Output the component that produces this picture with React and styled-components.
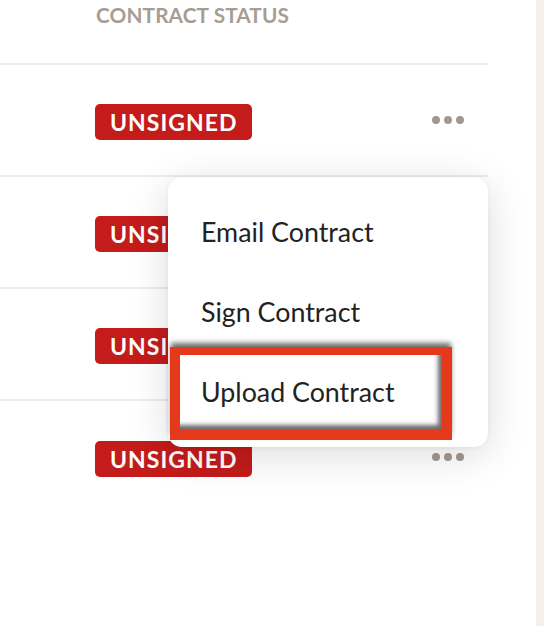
import React from "react";
import styled, { createGlobalStyle } from "styled-components";

const GlobalStyle = createGlobalStyle`
  html, body {
    margin: 0;
    padding: 0;
    background: #ffffff;
  }
  body {
    font-family: Lato, "Noto Sans", sans-serif;
  }
`;

const Page = styled.div`
  display: flex;
  width: 544px;
  height: 626px;
  overflow: hidden;
`;

const Main = styled.div`
  position: relative;
  flex: 1;
  background: #ffffff;
`;

const Gutter = styled.div`
  width: 8px;
  background: #f5efec;
`;

const Table = styled.div`
  width: 488px;
`;

const HeadRow = styled.div`
  display: flex;
  align-items: flex-start;
  height: 65px;
  padding-left: 96px;
  border-bottom: 2px solid #f3e9e6;
  box-sizing: border-box;
`;

const HeadCell = styled.div`
  padding-top: 2px;
  font-size: 20.8px;
  font-weight: 700;
  color: #a69d95;
  letter-spacing: 0.1px;
`;

const Row = styled.div`
  display: flex;
  align-items: center;
  justify-content: space-between;
  height: 112px;
  padding: 0 24px 0 95px;
  box-sizing: border-box;
  border-bottom: ${(p) => (p.last ? "none" : "2px solid #f3e9e6")};
`;

const Badge = styled.span`
  display: inline-flex;
  align-items: center;
  height: 36px;
  padding: 0 15px;
  margin-top: 4px;
  border-radius: 5px;
  background: #c41b1b;
  color: #ffffff;
  font-size: 23px;
  font-weight: 700;
  letter-spacing: 1px;
`;

const Dots = styled.button`
  display: flex;
  gap: 4px;
  padding: 0;
  border: none;
  background: none;
  cursor: pointer;
`;

const Dot = styled.span`
  width: 8px;
  height: 8px;
  border-radius: 50%;
  background: #a39891;
`;

const Menu = styled.div`
  position: absolute;
  top: 177px;
  left: 168px;
  width: 320px;
  padding: 15px 0;
  border-radius: 14px;
  background: #ffffff;
  box-shadow: 0 8px 40px rgba(0, 0, 0, 0.14), 0 1px 4px rgba(0, 0, 0, 0.05);
`;

const MenuItem = styled.div`
  display: flex;
  align-items: center;
  height: 80px;
  padding-left: 33px;
  font-size: 26.8px;
  color: #222222;
  cursor: pointer;
`;

const Highlight = styled.div`
  position: absolute;
  left: 2px;
  top: 170px;
  width: 282px;
  height: 93px;
  box-sizing: border-box;
  border: 10px solid #e5391b;
  border-top-width: 8px;
  box-shadow: 0 -5px 5px -1px rgba(60, 60, 60, 0.75),
    inset -4px -5px 4px rgba(70, 70, 70, 0.8);
  pointer-events: none;
`;

const rows = [1, 2, 3, 4];

export default function App() {
  return (
    <Page>
      <GlobalStyle />
      <Main>
        <Table>
          <HeadRow>
            <HeadCell>CONTRACT STATUS</HeadCell>
          </HeadRow>
          {rows.map((r) => (
            <Row key={r} last={r === rows.length}>
              <Badge>UNSIGNED</Badge>
              <Dots aria-label="More actions">
                <Dot />
                <Dot />
                <Dot />
              </Dots>
            </Row>
          ))}
        </Table>
        <Menu>
          <MenuItem>Email Contract</MenuItem>
          <MenuItem>Sign Contract</MenuItem>
          <MenuItem>Upload Contract</MenuItem>
          <Highlight />
        </Menu>
      </Main>
      <Gutter />
    </Page>
  );
}
